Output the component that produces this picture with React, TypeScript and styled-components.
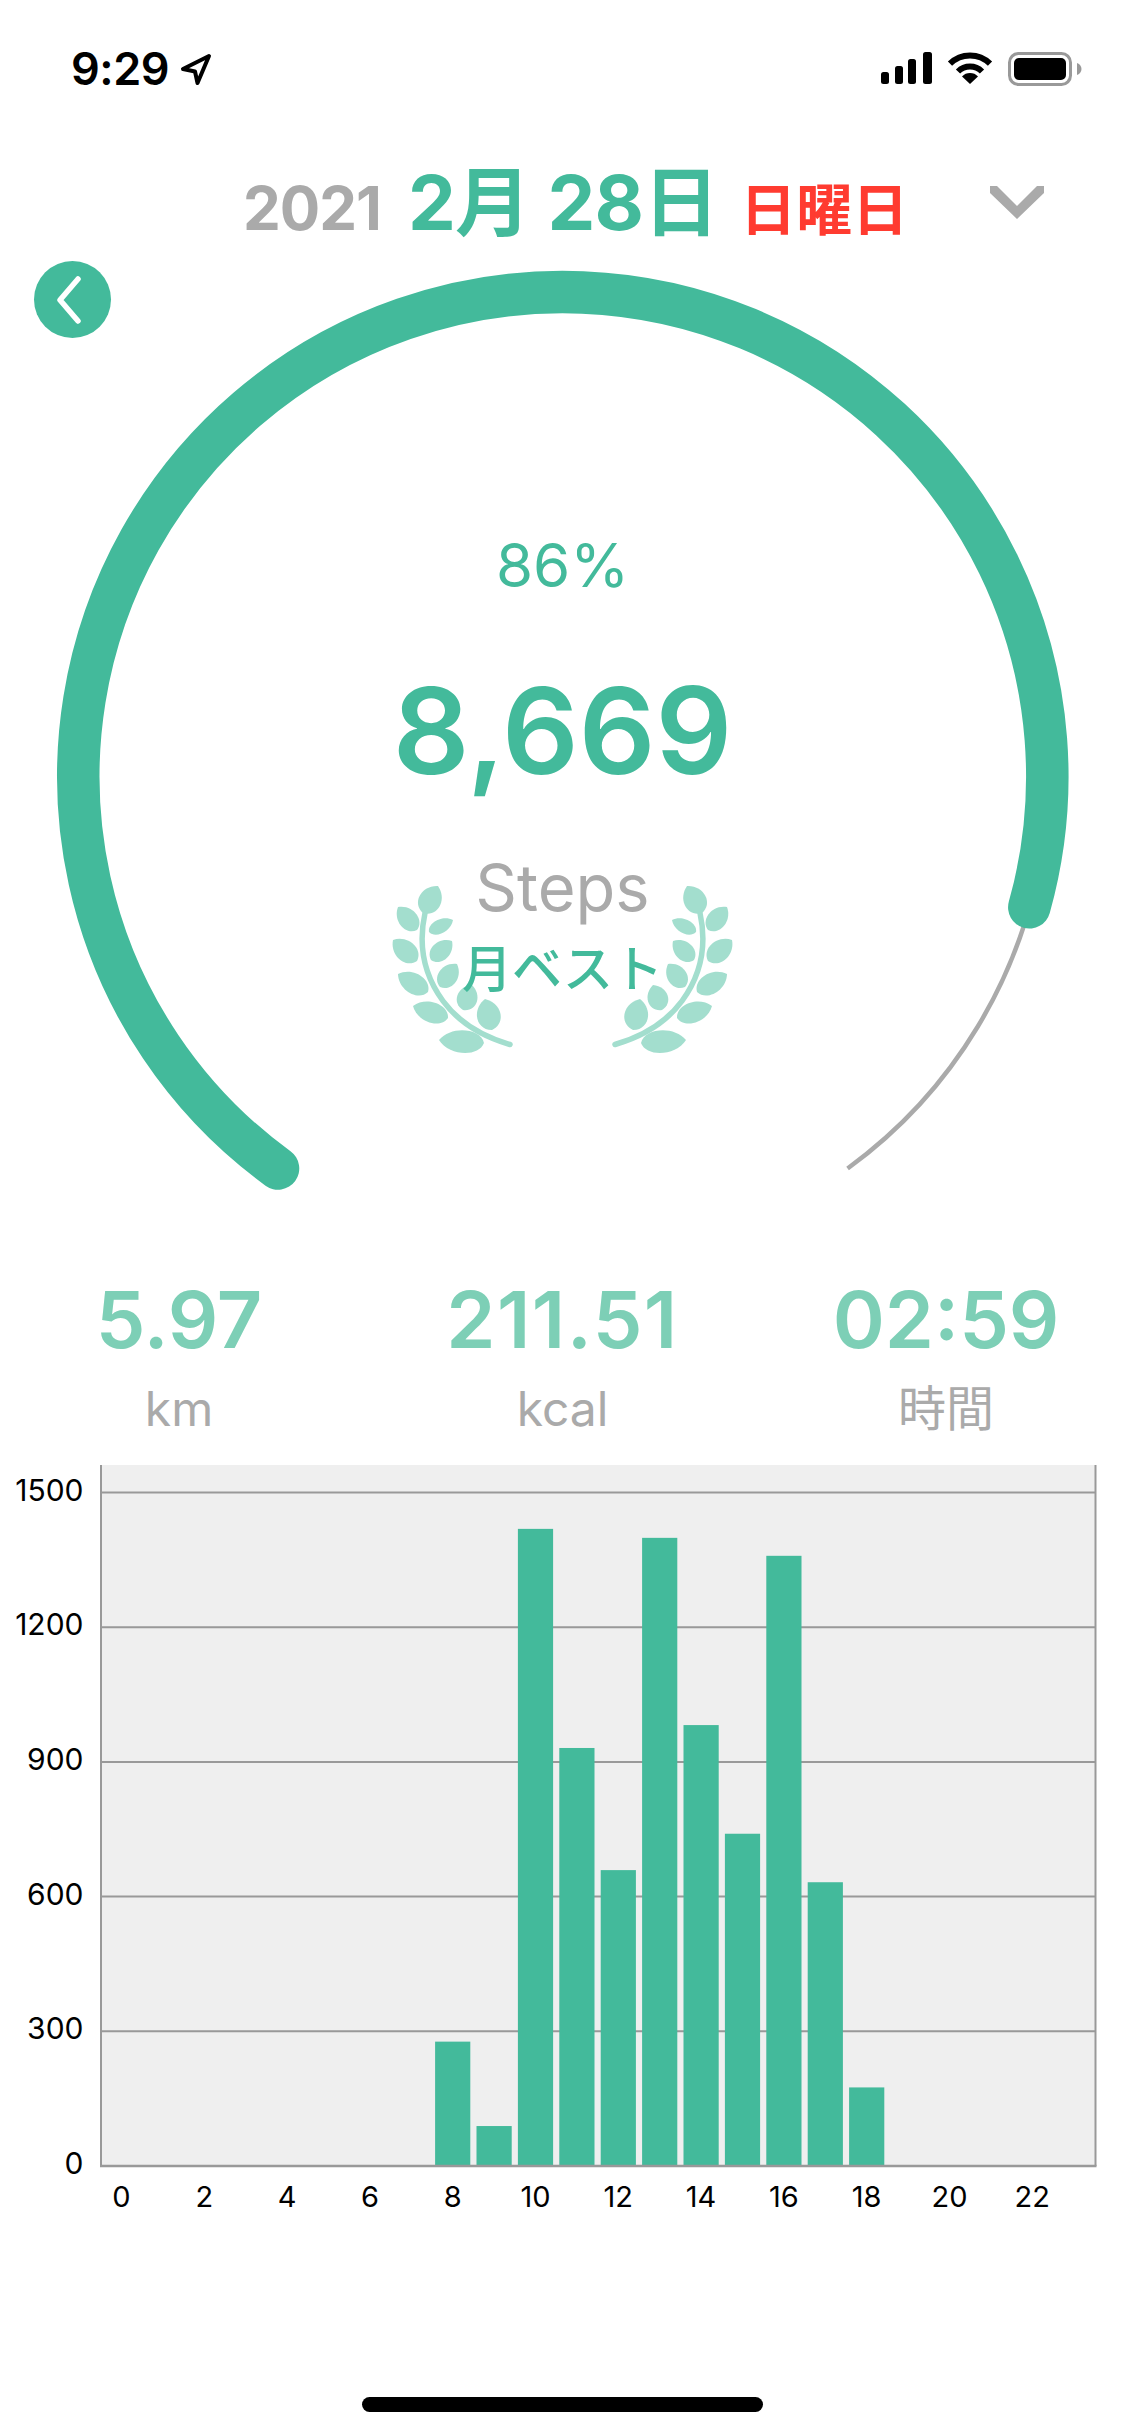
import React from "react";
import styled, { createGlobalStyle } from "styled-components";

const GREEN = "#43ba9b";
const LIGHT_GREEN = "#7dcfb6";
const LEAF = "#a3dece";
const GREY = "#aaaaaa";
const LINE = "#999999";

const GOAL = 10000;
const STEPS = 8669;
const HOURS = [0, 0, 0, 0, 0, 0, 0, 0, 277, 89, 1419, 931, 659, 1399, 982, 740, 1359, 632, 175, 0, 0, 0, 0, 0];

const GlobalStyle = createGlobalStyle`
    html, body {
        margin: 0;
        padding: 0;
        background: #fff;
    }
    body {
        font-family: Inter, "Noto Sans CJK JP", sans-serif;
    }
`;

const Page = styled.div`
    position: relative;
    width: 1125px;
    height: 2436px;
    overflow: hidden;
    background: #fff;
`;

const StatusBar = styled.div`
    height: 130px;
    box-sizing: border-box;
    padding: 52px 43px 0 71px;
    display: flex;
    align-items: flex-start;
    justify-content: space-between;
`;
const TimeGroup = styled.div`
    display: flex;
    align-items: flex-start;
    gap: 11px;
`;
const Time = styled.span`
    font-size: 45px;
    font-weight: 600;
    line-height: 34px;
    color: #000;
    letter-spacing: -0.5px;
`;
const StatusIcons = styled.div`
    display: flex;
    align-items: flex-start;
    gap: 15px;
`;
const IconSvg = styled.svg`
    display: block;
`;

const DateRow = styled.div`
    height: 130px;
    box-sizing: border-box;
    padding: 34px 0 0 243px;
    display: flex;
    align-items: baseline;
    line-height: 1;
`;
const Year = styled.span`
    font-size: 60px;
    font-weight: 700;
    color: ${GREY};
    margin-right: 27px;
    letter-spacing: -1px;
`;
const Day = styled.span`
    font-size: 76px;
    font-weight: 700;
    color: ${GREEN};
    margin-right: 22px;
    letter-spacing: -0.8px;
`;
const Weekday = styled.span`
    font-size: 56px;
    font-weight: 700;
    color: #ff3b30;
`;
const Chevron = styled.svg`
    margin-left: auto;
    margin-right: 81px;
    align-self: flex-start;
    margin-top: 22px;
`;

const RingArea = styled.div`
    position: relative;
    height: 990px;
`;
const RingSvg = styled.svg`
    display: block;
`;
const BackButton = styled.button`
    position: absolute;
    left: 34px;
    top: 1px;
    width: 77px;
    height: 77px;
    border: none;
    border-radius: 50%;
    padding: 0 8px 0 0;
    background: ${GREEN};
    display: flex;
    align-items: center;
    justify-content: center;
`;
const CenterStack = styled.div`
    position: absolute;
    left: 0;
    right: 0;
    top: 275px;
    display: flex;
    flex-direction: column;
    align-items: center;
    line-height: 1;
`;
const Percent = styled.div`
    font-size: 60px;
    font-weight: 400;
    color: ${GREEN};
`;
const Count = styled.div`
    font-size: 120px;
    font-weight: 600;
    color: ${GREEN};
    margin-top: 76px;
`;
const Unit = styled.div`
    font-size: 65px;
    font-weight: 400;
    color: ${GREY};
    margin-top: 64px;
`;
const Badge = styled.div`
    font-size: 50px;
    font-weight: 500;
    color: ${GREEN};
    margin-top: 24px;
`;

const StatsRow = styled.div`
    height: 215px;
    box-sizing: border-box;
    padding: 30px 29px 0;
    display: flex;
    justify-content: space-between;
`;
const Stat = styled.div`
    width: 300px;
    display: flex;
    flex-direction: column;
    align-items: center;
    line-height: 1;
`;
const StatValue = styled.div<{ $tracking?: number }>`
    font-size: 79px;
    font-weight: 600;
    color: ${LIGHT_GREEN};
    letter-spacing: ${(p) => p.$tracking ?? 0}px;
`;
const StatLabel = styled.div`
    font-size: 48px;
    font-weight: 400;
    color: ${GREY};
    margin-top: 26px;
`;

const ChartSvg = styled.svg`
    display: block;
    font-family: Inter, sans-serif;
`;

const HomeIndicator = styled.div`
    position: absolute;
    left: 362px;
    top: 2397px;
    width: 401px;
    height: 15px;
    border-radius: 8px;
    background: #000;
`;

// ring geometry, in RingArea coordinates
const CX = 562.8;
const CY = 516.5;
const R = 484.5;
const START_ANGLE = 126;
const SWEEP = 288;

function arc(from: number, to: number) {
    const point = (a: number) => {
        const rad = (a * Math.PI) / 180;
        return `${(CX + R * Math.cos(rad)).toFixed(2)} ${(CY + R * Math.sin(rad)).toFixed(2)}`;
    };
    return `M ${point(from)} A ${R} ${R} 0 ${to - from > 180 ? 1 : 0} 1 ${point(to)}`;
}

// a rounded leaf from its base to its tip
function leaf(x1: number, y1: number, x2: number, y2: number, w: number) {
    const dx = x2 - x1;
    const dy = y2 - y1;
    const len = Math.hypot(dx, dy);
    const nx = (-dy / len) * w * 0.7;
    const ny = (dx / len) * w * 0.7;
    const p = (t: number, s: number) =>
        `${(x1 + dx * t + nx * s).toFixed(1)} ${(y1 + dy * t + ny * s).toFixed(1)}`;
    return `M ${p(0, 0)} C ${p(0.1, 1)} ${p(0.75, 1.05)} ${p(1, 0)} C ${p(0.75, -1.05)} ${p(0.1, -1)} ${p(0, 0)} Z`;
}

const LEAVES: [number, number, number, number, number][] = [
    [423, 913, 438, 886, 21],
    [417, 930, 398, 907, 18],
    [429, 932, 453, 920, 13],
    [417, 961, 393, 940, 19],
    [431, 960, 452, 941, 17],
    [428, 992, 398, 974, 19],
    [440, 987, 457, 964, 18],
    [448, 1018, 413, 1006, 19],
    [463, 1010, 472, 985, 19],
    [492, 1030, 485, 999, 22],
    [484, 1043, 439, 1040, 21],
];

function Laurel() {
    return (
        <g transform="translate(0 -260)" fill={LEAF}>
            {[false, true].map((mirror) => (
                <g key={String(mirror)} transform={mirror ? "translate(1125 0) scale(-1 1)" : undefined}>
                    <path
                        d="M 425 913 C 418 945 424 975 443 1001 C 460 1024 484 1037 510 1044.5"
                        fill="none"
                        stroke={LEAF}
                        strokeWidth={5.5}
                        strokeLinecap="round"
                    />
                    {LEAVES.map((l, i) => (
                        <path key={i} d={leaf(...l)} />
                    ))}
                </g>
            ))}
        </g>
    );
}

function Ring({ value, goal }: { value: number; goal: number }) {
    return (
        <RingSvg width={1125} height={990} viewBox="0 0 1125 990">
            <path d={arc(START_ANGLE, START_ANGLE + SWEEP)} fill="none" stroke={GREY} strokeWidth={4.5} />
            <path
                d={arc(START_ANGLE, START_ANGLE + (SWEEP * value) / goal)}
                fill="none"
                stroke={GREEN}
                strokeWidth={42.5}
                strokeLinecap="round"
            />
            <Laurel />
        </RingSvg>
    );
}

// chart geometry, in ChartSvg coordinates
const PLOT_LEFT = 101;
const PLOT_RIGHT = 1095.5;
const BASE_Y = 701;
const PER_300 = 134.7;
const SLOT = 41.4;
const BAR_W = 35.2;

function HourChart({ data }: { data: number[] }) {
    const ticks = [0, 300, 600, 900, 1200, 1500];
    return (
        <ChartSvg width={1125} height={760} viewBox="0 0 1125 760">
            <rect x={PLOT_LEFT} y={0} width={PLOT_RIGHT - PLOT_LEFT} height={BASE_Y} fill="#efefef" />
            {ticks.map((t) => {
                const y = BASE_Y - (t / 300) * PER_300;
                return (
                    <g key={t}>
                        {t > 0 && <line x1={PLOT_LEFT} x2={PLOT_RIGHT} y1={y} y2={y} stroke={LINE} strokeWidth={2} />}
                        <text x={83.5} y={y + 8} textAnchor="end" fontSize={30} fill="#000">
                            {t}
                        </text>
                    </g>
                );
            })}
            {data.map((v, i) =>
                v > 0 ? (
                    <rect
                        key={i}
                        x={121.5 + SLOT * i - BAR_W / 2}
                        y={BASE_Y - (v / 300) * PER_300}
                        width={BAR_W}
                        height={(v / 300) * PER_300}
                        fill={GREEN}
                    />
                ) : null
            )}
            <line x1={PLOT_LEFT} x2={PLOT_LEFT} y1={0} y2={BASE_Y} stroke={LINE} strokeWidth={2} />
            <line x1={PLOT_RIGHT} x2={PLOT_RIGHT} y1={0} y2={BASE_Y} stroke={LINE} strokeWidth={2} />
            <line x1={PLOT_LEFT - 1} x2={PLOT_RIGHT + 1} y1={BASE_Y} y2={BASE_Y} stroke={LINE} strokeWidth={2.5} />
            {data.map((_, i) =>
                i % 2 === 0 ? (
                    <text key={i} x={121.5 + SLOT * i} y={742} textAnchor="middle" fontSize={29} fill="#000">
                        {i}
                    </text>
                ) : null
            )}
        </ChartSvg>
    );
}

export default function App() {
    return (
        <Page>
            <GlobalStyle />
            <StatusBar>
                <TimeGroup>
                    <Time>9:29</Time>
                    <IconSvg width={32} height={34} viewBox="0 0 32 34">
                        <path
                            d="M 29 4 L 3 17 L 15 19.5 L 17.5 31 Z"
                            fill="none"
                            stroke="#000"
                            strokeWidth={4}
                            strokeLinejoin="round"
                        />
                    </IconSvg>
                </TimeGroup>
                <StatusIcons>
                    <IconSvg width={51} height={32} viewBox="0 0 51 32">
                        <rect x={0} y={20} width={8} height={12} rx={2.5} />
                        <rect x={14} y={14} width={8} height={18} rx={2.5} />
                        <rect x={27} y={7} width={8} height={25} rx={2.5} />
                        <rect x={42} y={0} width={9} height={32} rx={2.5} />
                    </IconSvg>
                    <IconSvg width={46} height={32} viewBox="0 0 46 32">
                        <path d="M 3 11.6 A 28.5 28.5 0 0 1 43 11.6" fill="none" stroke="#000" strokeWidth={6} />
                        <path d="M 11 19.5 A 17 17 0 0 1 35 19.5" fill="none" stroke="#000" strokeWidth={6} />
                        <path d="M 23 32 L 15 24.5 A 11 11 0 0 1 31 24.5 Z" />
                    </IconSvg>
                    <IconSvg width={74} height={34} viewBox="0 0 74 34">
                        <rect x={1.5} y={1.5} width={61} height={31} rx={9} fill="none" stroke={LINE} strokeWidth={3} />
                        <rect x={6} y={6} width={52} height={22} rx={5} />
                        <path d="M 69 11 C 72 12 73.5 14.5 73.5 17 C 73.5 19.5 72 22 69 23 Z" fill={LINE} />
                    </IconSvg>
                </StatusIcons>
            </StatusBar>

            <DateRow>
                <Year>2021</Year>
                <Day>2月 28日</Day>
                <Weekday>日曜日</Weekday>
                <Chevron width={54} height={33} viewBox="0 0 54 33">
                    <path d="M 0 0 L 7 0 L 27 20 L 47 0 L 54 0 L 54 7 L 27 33 L 0 7 Z" fill={GREY} />
                </Chevron>
            </DateRow>

            <RingArea>
                <Ring value={STEPS} goal={GOAL} />
                <BackButton>
                    <IconSvg width={26} height={48} viewBox="0 0 26 48">
                        <path
                            d="M 22 3 L 4 24 L 22 45"
                            fill="none"
                            stroke="#fff"
                            strokeWidth={5.5}
                            strokeLinecap="round"
                            strokeLinejoin="round"
                        />
                    </IconSvg>
                </BackButton>
                <CenterStack>
                    <Percent>86%</Percent>
                    <Count>8,669</Count>
                    <Unit>Steps</Unit>
                    <Badge>月ベスト</Badge>
                </CenterStack>
            </RingArea>

            <StatsRow>
                <Stat>
                    <StatValue>5.97</StatValue>
                    <StatLabel>km</StatLabel>
                </Stat>
                <Stat>
                    <StatValue $tracking={1.5}>211.51</StatValue>
                    <StatLabel>kcal</StatLabel>
                </Stat>
                <Stat>
                    <StatValue>02:59</StatValue>
                    <StatLabel>時間</StatLabel>
                </Stat>
            </StatsRow>

            <HourChart data={HOURS} />
            <HomeIndicator />
        </Page>
    );
}
